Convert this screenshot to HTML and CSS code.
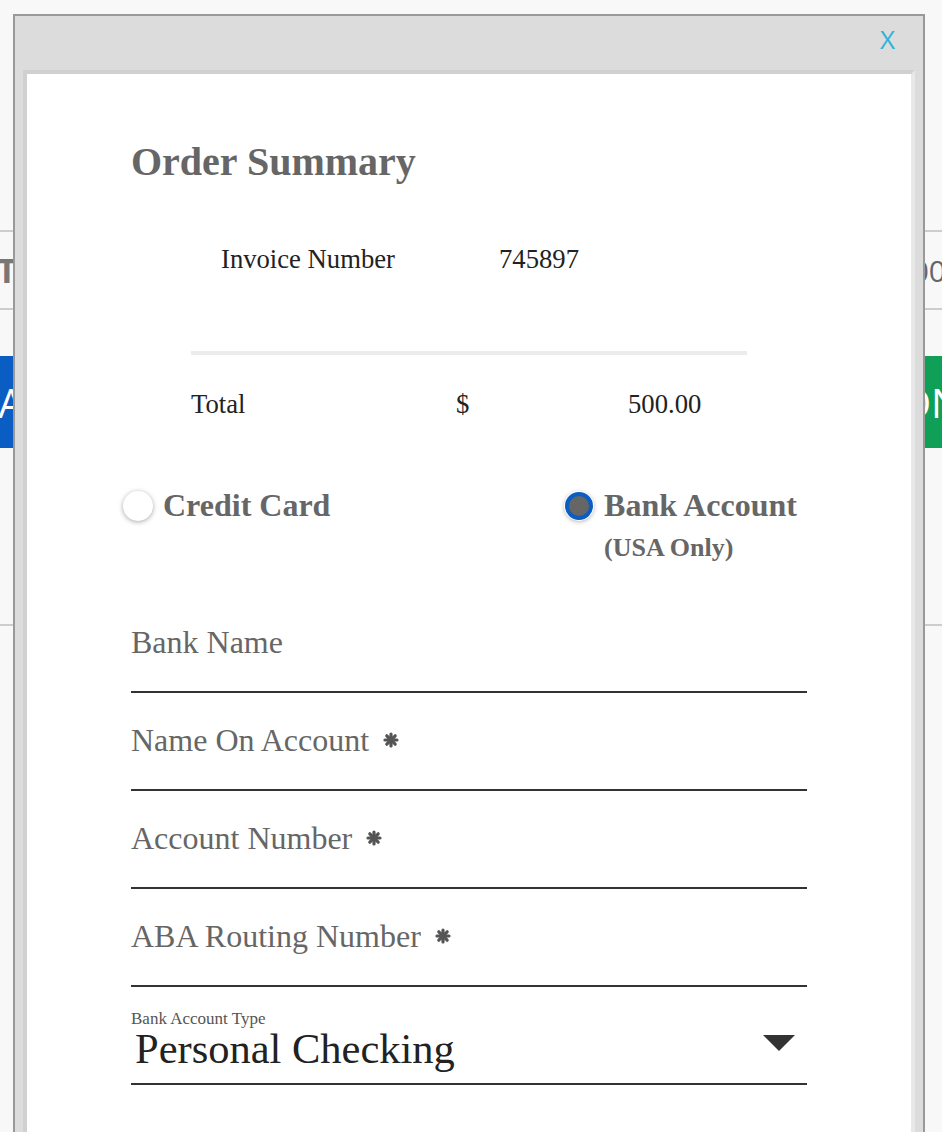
FILE: index.html
```html
<!DOCTYPE html>
<html lang="en">
<head>
<meta charset="utf-8">
<title>Order Summary</title>
<link rel="stylesheet" href="styles.css">
</head>
<body>
<div class="page">
  <div class="bg-row">
    <span class="bg-label">Total</span>
    <span class="bg-amount">$500.00</span>
  </div>
  <div class="bg-actions">
    <div class="bg-btn bg-btn-blue"><span>CANCEL</span></div>
    <div class="bg-btn bg-btn-green"><span>ONTINUE</span></div>
  </div>
  <div class="bg-rule"></div>
</div>

<div class="modal">
  <div class="modal-header">
    <span class="close">X</span>
  </div>
  <div class="panel">
    <h1 class="title">Order Summary</h1>

    <div class="summary">
      <div class="invoice-row">
        <span class="invoice-label">Invoice Number</span>
        <span class="invoice-value">745897</span>
      </div>
      <div class="divider"></div>
      <div class="total-row">
        <span class="total-label">Total</span>
        <span class="total-currency">$</span>
        <span class="total-value">500.00</span>
      </div>
    </div>

    <div class="methods">
      <div class="method">
        <span class="radio"></span>
        <span class="method-label">Credit Card</span>
      </div>
      <div class="method method-bank">
        <span class="radio radio-checked"></span>
        <div class="method-text">
          <span class="method-label">Bank Account</span>
          <span class="method-note">(USA Only)</span>
        </div>
      </div>
    </div>

    <div class="field field-first">
      <span class="field-label">Bank Name</span>
    </div>
    <div class="field">
      <span class="field-label">Name On Account</span>
      <svg class="req" viewBox="0 0 16 16" width="16" height="16" aria-hidden="true"><g stroke="#555" stroke-width="3.2" stroke-linecap="round"><line x1="8" y1="2" x2="8" y2="14"/><line x1="2" y1="8" x2="14" y2="8"/><line x1="3.8" y1="3.8" x2="12.2" y2="12.2"/><line x1="12.2" y1="3.8" x2="3.8" y2="12.2"/></g></svg>
    </div>
    <div class="field">
      <span class="field-label">Account Number</span>
      <svg class="req" viewBox="0 0 16 16" width="16" height="16" aria-hidden="true"><g stroke="#555" stroke-width="3.2" stroke-linecap="round"><line x1="8" y1="2" x2="8" y2="14"/><line x1="2" y1="8" x2="14" y2="8"/><line x1="3.8" y1="3.8" x2="12.2" y2="12.2"/><line x1="12.2" y1="3.8" x2="3.8" y2="12.2"/></g></svg>
    </div>
    <div class="field">
      <span class="field-label">ABA Routing Number</span>
      <svg class="req" viewBox="0 0 16 16" width="16" height="16" aria-hidden="true"><g stroke="#555" stroke-width="3.2" stroke-linecap="round"><line x1="8" y1="2" x2="8" y2="14"/><line x1="2" y1="8" x2="14" y2="8"/><line x1="3.8" y1="3.8" x2="12.2" y2="12.2"/><line x1="12.2" y1="3.8" x2="3.8" y2="12.2"/></g></svg>
    </div>
    <div class="field field-select">
      <span class="select-label">Bank Account Type</span>
      <div class="select-row">
        <span class="select-value">Personal Checking</span>
        <span class="caret"></span>
      </div>
    </div>
  </div>
</div>
</body>
</html>
```

FILE: styles.css
```css
html, body {
  margin: 0;
  padding: 0;
  height: 1132px;
  overflow: hidden;
}

body {
  background: #f8f8f8;
  position: relative;
  font-family: "Liberation Serif", "Times New Roman", serif;
}

/* ---------- background page ---------- */
.page {
  padding-top: 230px;
  font-family: "Open Sans", "Liberation Sans", sans-serif;
}

.bg-row {
  height: 76px;
  border-top: 2px solid #cdcdcd;
  border-bottom: 2px solid #cdcdcd;
  display: flex;
  justify-content: space-between;
  align-items: center;
}

.bg-label {
  margin-left: -3px;
  font-size: 34px;
  font-weight: 700;
  color: #777;
}

.bg-amount {
  margin-right: -4px;
  font-size: 30px;
  color: #666;
}

.bg-actions {
  margin-top: 46px;
  height: 92px;
  display: flex;
  justify-content: space-between;
}

.bg-btn {
  height: 92px;
  display: flex;
  align-items: center;
  overflow: hidden;
  white-space: nowrap;
  color: #fff;
  font-size: 40px;
  font-weight: 400;
}

.bg-btn-blue {
  width: 13px;
  background: #0a5dc2;
}

.bg-btn-blue span {
  margin-left: -27px;
}

.bg-btn-green {
  width: 42px;
  background: #0f9f56;
}

.bg-rule {
  margin-top: 176px;
  border-top: 2px solid #cdcdcd;
}

/* ---------- modal ---------- */
.modal {
  position: absolute;
  left: 13px;
  top: 14px;
  width: 908px;
  height: 1140px;
  border: 2px solid #999;
  border-bottom: none;
  background: #dcdcdc;
}

.modal-header {
  height: 54px;
  box-sizing: border-box;
  display: flex;
  justify-content: flex-end;
  align-items: flex-start;
  padding: 10px 28px 0 0;
}

.close {
  font-family: "Open Sans", "Liberation Sans", sans-serif;
  font-weight: 400;
  font-size: 26px;
  line-height: 26px;
  color: #2bb3da;
}

.panel {
  margin: 0 8px;
  min-height: 1100px;
  border: 4px solid;
  border-color: #d0d0d0 #e8e8e8 #e8e8e8 #d0d0d0;
  background: #fff;
  padding: 64px 104px 40px;
}

.title {
  margin: 0;
  font-size: 40px;
  line-height: 48px;
  font-weight: 700;
  color: #666;
}

/* summary */
.summary {
  margin: 57px 0 0 60px;
  width: 556px;
  font-size: 26.67px;
  line-height: 32px;
  color: #222;
}

.invoice-row {
  display: flex;
  padding-left: 30px;
}

.invoice-label {
  width: 278px;
}

.divider {
  margin-top: 76px;
  height: 4px;
  background: #ececec;
}

.total-row {
  margin-top: 33px;
  display: grid;
  grid-template-columns: 265px 172px auto;
}

/* payment methods */
.methods {
  margin: 65px 10px 0 -8px;
  display: flex;
  justify-content: space-between;
  align-items: flex-start;
}

.method {
  display: flex;
  align-items: flex-start;
  gap: 10px;
}

.method-bank {
  gap: 11px;
}

.method-text {
  display: flex;
  flex-direction: column;
}

.method-label {
  font-size: 32px;
  line-height: 40px;
  font-weight: 700;
  color: #666;
}

.method-note {
  margin-top: 8px;
  font-size: 26px;
  line-height: 30px;
  font-weight: 700;
  color: #666;
}

.radio {
  flex: none;
  width: 30px;
  height: 30px;
  margin-top: 6px;
  border-radius: 50%;
  background: #fff;
  box-shadow: 0 1px 5px rgba(0, 0, 0, 0.35);
}

.radio-checked {
  width: 28px;
  height: 28px;
  margin-top: 7px;
  box-sizing: border-box;
  background: #666;
  border: 4px solid #0a5dc2;
  box-shadow: 0 0 0 1px #fff, 0 1px 5px rgba(0, 0, 0, 0.4);
}

/* fields */
.field {
  height: 98px;
  box-sizing: border-box;
  padding-top: 27px;
  border-bottom: 2px solid #333;
  display: flex;
  align-items: flex-start;
  gap: 14px;
}

.field-first {
  margin-top: 32px;
}

.field-label {
  font-size: 32px;
  line-height: 40px;
  color: #666;
}

.req {
  margin-top: 12px;
  flex: none;
}

.field-select {
  height: 98px;
  padding-top: 22px;
  flex-direction: column;
  gap: 0;
}

.select-label {
  font-size: 17px;
  line-height: 19px;
  color: #555;
}

.select-row {
  width: 100%;
  display: flex;
  justify-content: space-between;
  align-items: flex-start;
}

.select-value {
  margin-left: 4px;
  font-size: 42.5px;
  line-height: 41px;
  color: #222;
}

.caret {
  margin: 7px 12px 0 0;
  width: 0;
  height: 0;
  border-left: 16px solid transparent;
  border-right: 16px solid transparent;
  border-top: 16px solid #333;
}
```
